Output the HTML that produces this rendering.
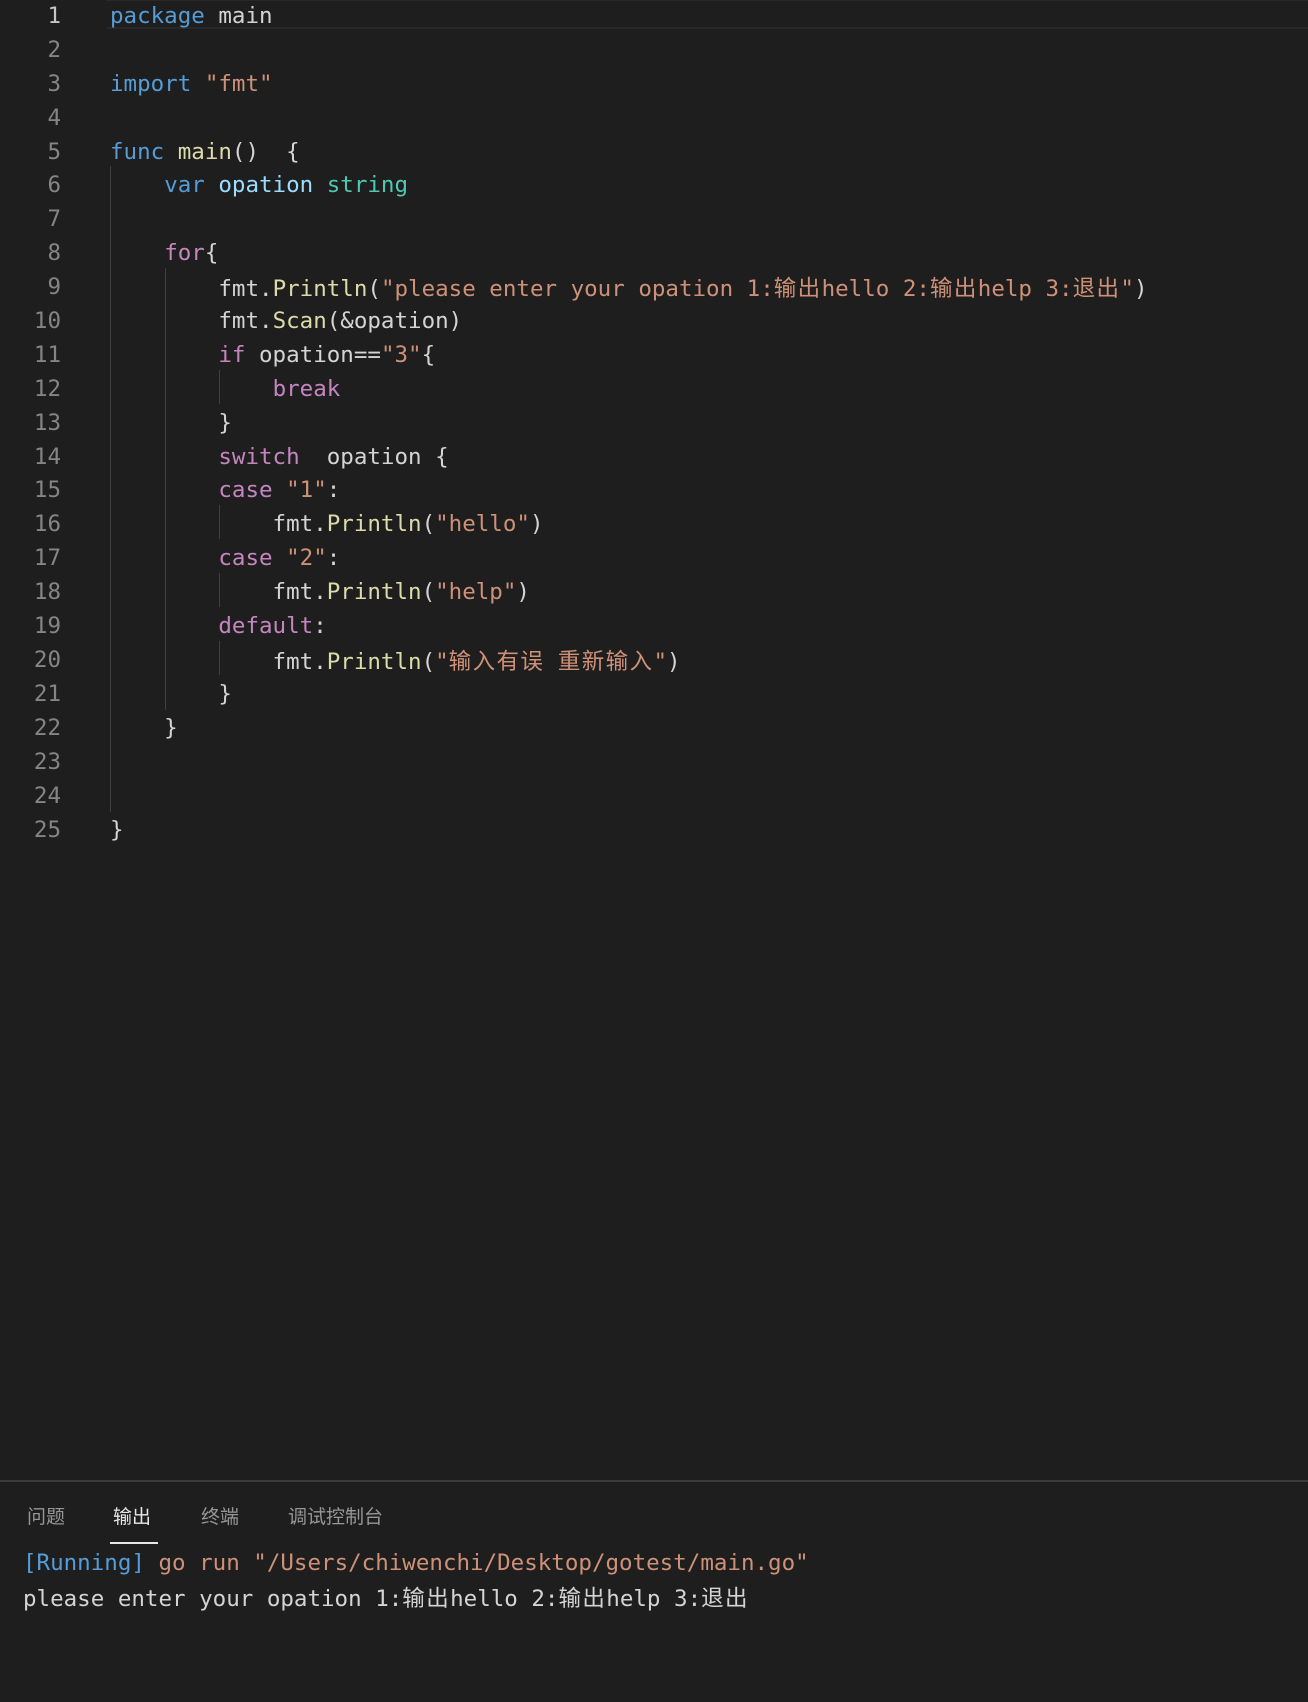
<!DOCTYPE html>
<html><head><meta charset="utf-8"><style>
html,body{margin:0;padding:0;background:#1e1e1e;width:1308px;height:1702px;overflow:hidden}
body{position:relative;font-family:"DejaVu Sans Mono","Liberation Mono","Noto Sans CJK SC",monospace;font-size:22.5px;color:#d4d4d4}
.ln{position:absolute;left:0;width:61px;text-align:right;color:#858585;height:34px;line-height:34px}
.c{position:absolute;left:110px;white-space:pre;height:34px;line-height:34px}
.k{color:#569cd6}.f{color:#dcdcaa}.s{color:#ce9178}.v{color:#9cdcfe}.t{color:#4ec9b0}.p{color:#c586c0}
.z{font-family:"Noto Sans CJK SC",sans-serif;letter-spacing:1.4px}
.g{position:absolute;width:1px;background:#404040}
.tab{position:absolute;top:1502px;font-family:"Liberation Sans","Noto Sans CJK SC",sans-serif;font-size:19px;color:#969696}
.o{position:absolute;left:23px;white-space:pre;line-height:34px}
.w{position:absolute;left:0;top:2px;width:100%;height:100%}
</style></head><body>
<div style="position:absolute;left:106px;top:0;width:1202px;height:29px;border-bottom:2px solid #282828;border-top:1px solid #282828;box-sizing:border-box"></div>
<div class="g" style="left:110px;top:166px;height:646px"></div>
<div class="g" style="left:165px;top:268px;height:442px"></div>
<div class="g" style="left:219px;top:370px;height:34px"></div>
<div class="g" style="left:219px;top:505px;height:34px"></div>
<div class="g" style="left:219px;top:573px;height:34px"></div>
<div class="g" style="left:219px;top:641px;height:34px"></div>
<div class="w">
<div class="ln" style="top:-3px;color:#c6c6c6">1</div><div class="c" style="top:-3px"><span class="k">package</span> main</div>
<div class="ln" style="top:31px">2</div>
<div class="ln" style="top:65px">3</div><div class="c" style="top:65px"><span class="k">import</span> <span class="s">"fmt"</span></div>
<div class="ln" style="top:99px">4</div>
<div class="ln" style="top:133px">5</div><div class="c" style="top:133px"><span class="k">func</span> <span class="f">main</span>()  {</div>
<div class="ln" style="top:166px">6</div><div class="c" style="top:166px">    <span class="k">var</span> <span class="v">opation</span> <span class="t">string</span></div>
<div class="ln" style="top:200px">7</div>
<div class="ln" style="top:234px">8</div><div class="c" style="top:234px">    <span class="p">for</span>{</div>
<div class="ln" style="top:268px">9</div><div class="c" style="top:268px">        fmt.<span class="f">Println</span>(<span class="s">"please enter your opation 1:<span class="z">输出</span>hello 2:<span class="z">输出</span>help 3:<span class="z">退出</span>"</span>)</div>
<div class="ln" style="top:302px">10</div><div class="c" style="top:302px">        fmt.<span class="f">Scan</span>(&amp;opation)</div>
<div class="ln" style="top:336px">11</div><div class="c" style="top:336px">        <span class="p">if</span> opation==<span class="s">"3"</span>{</div>
<div class="ln" style="top:370px">12</div><div class="c" style="top:370px">            <span class="p">break</span></div>
<div class="ln" style="top:404px">13</div><div class="c" style="top:404px">        }</div>
<div class="ln" style="top:438px">14</div><div class="c" style="top:438px">        <span class="p">switch</span>  opation {</div>
<div class="ln" style="top:471px">15</div><div class="c" style="top:471px">        <span class="p">case</span> <span class="s">"1"</span>:</div>
<div class="ln" style="top:505px">16</div><div class="c" style="top:505px">            fmt.<span class="f">Println</span>(<span class="s">"hello"</span>)</div>
<div class="ln" style="top:539px">17</div><div class="c" style="top:539px">        <span class="p">case</span> <span class="s">"2"</span>:</div>
<div class="ln" style="top:573px">18</div><div class="c" style="top:573px">            fmt.<span class="f">Println</span>(<span class="s">"help"</span>)</div>
<div class="ln" style="top:607px">19</div><div class="c" style="top:607px">        <span class="p">default</span>:</div>
<div class="ln" style="top:641px">20</div><div class="c" style="top:641px">            fmt.<span class="f">Println</span>(<span class="s">"<span class="z">输入有误</span> <span class="z">重新输入</span>"</span>)</div>
<div class="ln" style="top:675px">21</div><div class="c" style="top:675px">        }</div>
<div class="ln" style="top:709px">22</div><div class="c" style="top:709px">    }</div>
<div class="ln" style="top:743px">23</div>
<div class="ln" style="top:777px">24</div>
<div class="ln" style="top:811px">25</div><div class="c" style="top:811px">}</div>
</div>
<div style="position:absolute;left:0;top:1480px;width:1308px;height:2px;background:#3c3c3c"></div>
<div class="tab" style="left:27px">问题</div>
<div class="tab" style="left:113px;color:#e7e7e7">输出</div>
<div class="tab" style="left:201px">终端</div>
<div class="tab" style="left:288px">调试控制台</div>
<div style="position:absolute;left:110px;top:1542px;width:48px;height:2px;background:#e7e7e7"></div>
<div class="o" style="top:1546px"><span class="k">[Running]</span> <span class="s">go run "/Users/chiwenchi/Desktop/gotest/main.go"</span></div>
<div class="o" style="top:1580px">please enter your opation 1:<span class="z">输出</span>hello 2:<span class="z">输出</span>help 3:<span class="z">退出</span></div>
</body></html>
